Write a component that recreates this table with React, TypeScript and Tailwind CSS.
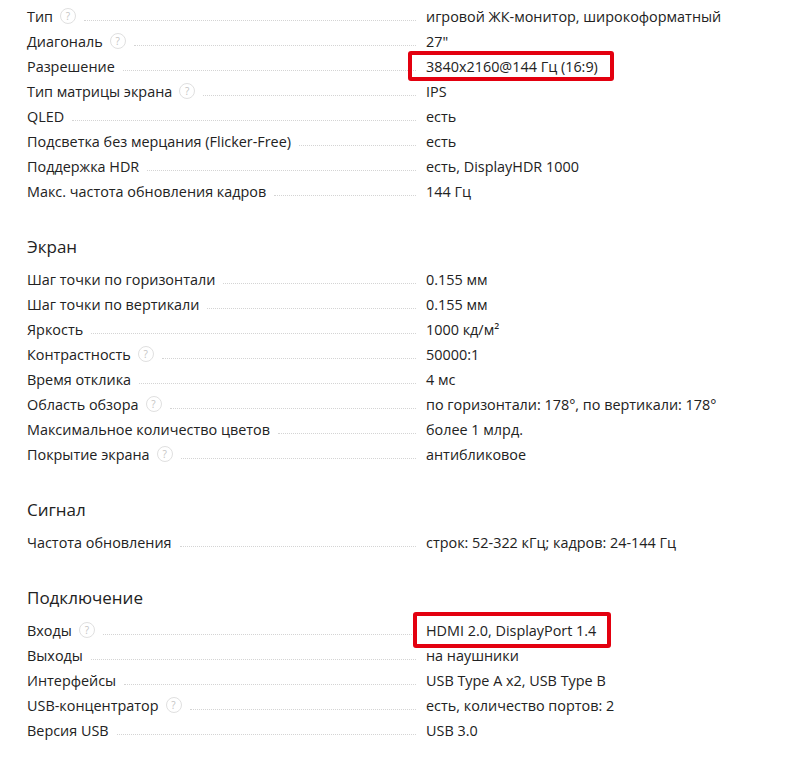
type Spec = {
  label: string;
  value: string;
  hint?: boolean;
  highlight?: 'sm' | 'lg';
};

type Section = {
  title?: string;
  rows: Spec[];
};

const sections: Section[] = [
  {
    rows: [
      { label: 'Тип', value: 'игровой ЖК-монитор, широкоформатный', hint: true },
      { label: 'Диагональ', value: '27"', hint: true },
      { label: 'Разрешение', value: '3840x2160@144 Гц (16:9)', highlight: 'sm' },
      { label: 'Тип матрицы экрана', value: 'IPS', hint: true },
      { label: 'QLED', value: 'есть' },
      { label: 'Подсветка без мерцания (Flicker-Free)', value: 'есть' },
      { label: 'Поддержка HDR', value: 'есть, DisplayHDR 1000' },
      { label: 'Макс. частота обновления кадров', value: '144 Гц' },
    ],
  },
  {
    title: 'Экран',
    rows: [
      { label: 'Шаг точки по горизонтали', value: '0.155 мм' },
      { label: 'Шаг точки по вертикали', value: '0.155 мм' },
      { label: 'Яркость', value: '1000 кд/м²' },
      { label: 'Контрастность', value: '50000:1', hint: true },
      { label: 'Время отклика', value: '4 мс' },
      { label: 'Область обзора', value: 'по горизонтали: 178°, по вертикали: 178°', hint: true },
      { label: 'Максимальное количество цветов', value: 'более 1 млрд.' },
      { label: 'Покрытие экрана', value: 'антибликовое', hint: true },
    ],
  },
  {
    title: 'Сигнал',
    rows: [{ label: 'Частота обновления', value: 'строк: 52-322 кГц; кадров: 24-144 Гц' }],
  },
  {
    title: 'Подключение',
    rows: [
      { label: 'Входы', value: 'HDMI 2.0, DisplayPort 1.4', hint: true, highlight: 'lg' },
      { label: 'Выходы', value: 'на наушники' },
      { label: 'Интерфейсы', value: 'USB Type A x2, USB Type B' },
      { label: 'USB-концентратор', value: 'есть, количество портов: 2', hint: true },
      { label: 'Версия USB', value: 'USB 3.0' },
    ],
  },
];

function Hint() {
  return (
    <span className="ml-[7px] inline-flex h-[16px] w-[16px] shrink-0 items-center justify-center rounded-full border border-[#e0e0e0] text-[10px] leading-none text-[#c4c4c4]">
      ?
    </span>
  );
}

function Row({ spec }: { spec: Spec }) {
  return (
    <div className="flex h-[25px] items-center">
      <div className="flex w-[389px] items-center">
        <span className="whitespace-nowrap">{spec.label}</span>
        {spec.hint && <Hint />}
        <span className="ml-[8px] mt-[8px] flex-1 border-b border-dotted border-[#d4d4d4]" />
      </div>
      <div className="relative ml-[10px] whitespace-nowrap leading-[21px]">
        {spec.value}
        {/* red marker boxes drawn over the value */}
        {spec.highlight === 'sm' && (
          <span className="absolute left-[-18px] right-[-16px] top-[-5px] bottom-[-4px] rounded-[3px] border-[4px] border-[#e3000f]" />
        )}
        {spec.highlight === 'lg' && (
          <span className="absolute left-[-13px] right-[-15px] top-[-8px] bottom-[-7px] rounded-[3px] border-[4px] border-[#e3000f]" />
        )}
      </div>
    </div>
  );
}

export default function App() {
  return (
    <div
      className="min-h-[773px] w-[793px] bg-white pl-[27px] pt-[4px] text-[14.4px] text-[#222]"
      style={{ fontFamily: '"Open Sans", "Liberation Sans", sans-serif' }}
    >
      {sections.map((section, i) => (
        <div key={i} className={section.title ? 'mt-[30px]' : ''}>
          {section.title && (
            <h2 className="mb-[8px] h-[25px] text-[17px] leading-[25px] text-[#222]">{section.title}</h2>
          )}
          {section.rows.map((row) => (
            <Row key={row.label} spec={row} />
          ))}
        </div>
      ))}
    </div>
  );
}
